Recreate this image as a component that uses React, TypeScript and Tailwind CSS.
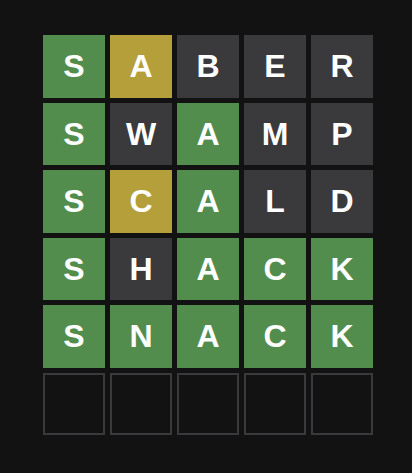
import React from 'react';

type State = 'correct' | 'present' | 'absent' | 'empty';

const rows: { word: string; states: State[] }[] = [
  { word: 'SABER', states: ['correct', 'present', 'absent', 'absent', 'absent'] },
  { word: 'SWAMP', states: ['correct', 'absent', 'correct', 'absent', 'absent'] },
  { word: 'SCALD', states: ['correct', 'present', 'correct', 'absent', 'absent'] },
  { word: 'SHACK', states: ['correct', 'absent', 'correct', 'correct', 'correct'] },
  { word: 'SNACK', states: ['correct', 'correct', 'correct', 'correct', 'correct'] },
  { word: '     ', states: ['empty', 'empty', 'empty', 'empty', 'empty'] },
];

const tileClass: Record<State, string> = {
  correct: 'bg-[#538d4e]',
  present: 'bg-[#b59f3b]',
  absent: 'bg-[#3a3a3c]',
  empty: 'border-2 border-[#3a3a3c]',
};

const Tile: React.FC<{ letter: string; state: State }> = ({ letter, state }) => (
  <div
    className={`flex items-center justify-center text-[32px] font-bold leading-none text-white uppercase ${tileClass[state]}`}
    style={{ fontFamily: '"Liberation Sans", Arial, sans-serif' }}
  >
    {letter.trim()}
  </div>
);

export default function App() {
  return (
    <div className="min-h-[473px] w-full bg-[#121213] pt-[25px] pl-[33px]">
      <div className="grid h-[420px] w-[350px] grid-rows-6 gap-[5px] p-[10px]">
        {rows.map((row, i) => (
          <div key={i} className="grid grid-cols-5 gap-[5px]">
            {row.word.split('').map((ch, j) => (
              <Tile key={j} letter={ch} state={row.states[j]} />
            ))}
          </div>
        ))}
      </div>
    </div>
  );
}
